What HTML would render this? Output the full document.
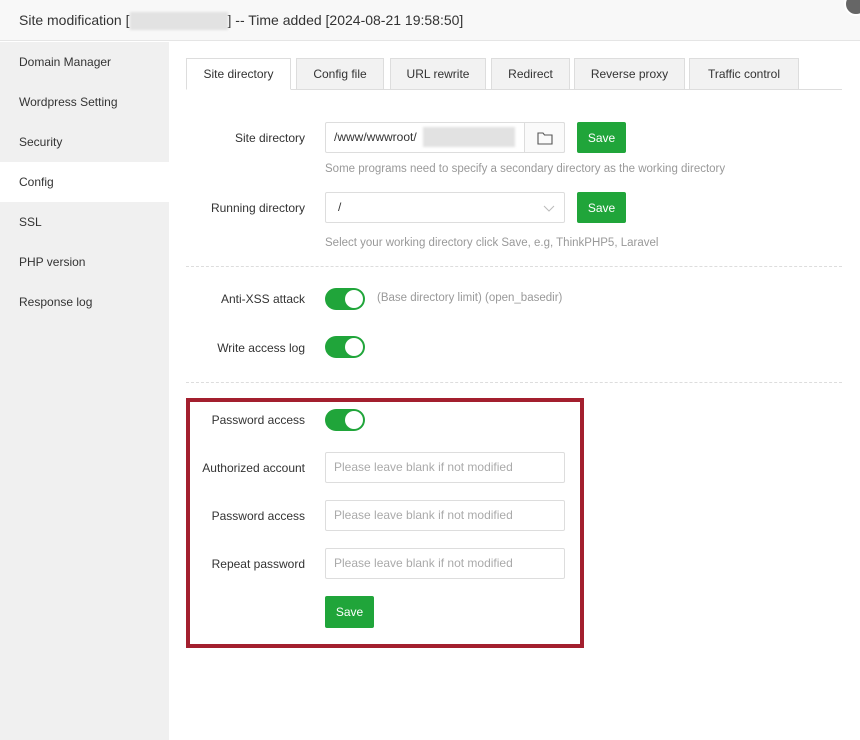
<!DOCTYPE html><html><head><style>
*{box-sizing:border-box;margin:0;padding:0}
body{width:860px;height:740px;overflow:hidden;font-family:"Liberation Sans",sans-serif;font-size:12px;color:#333;background:#fff;position:relative}
.hd{position:absolute;left:0;top:0;width:860px;height:41px;background:#f8f8f8;border-bottom:1px solid #e5e5e5;font-size:14px;line-height:40px;padding-left:19px;color:#333}
.blur{display:inline-block;width:98px;height:18px;background:#e2e2e2;vertical-align:middle;filter:blur(1px)}
.close{position:absolute;left:844px;top:-8px;width:24px;height:24px;border-radius:50%;background:#666;border:2px solid #fff}
.sb{position:absolute;left:0;top:42px;width:169px;height:698px;background:#f0f0f0}
.sb div{height:40px;line-height:40px;padding-left:19px;font-size:12px;color:#333}
.sb .on{background:#fff}
.tabs{position:absolute;left:186px;top:89px;width:656px;border-top:1px solid #ddd}
.tab{position:absolute;top:58px;height:32px;line-height:31px;text-align:center;background:#f2f2f2;border:1px solid #ddd;font-size:12px;color:#333}
.tab.on{background:#fff;border-bottom-color:#fff;height:32px}
.lbl{position:absolute;width:120px;text-align:right;left:185px;font-size:12px;color:#333}
.inp{position:absolute;border:1px solid #ddd;border-radius:2px;height:31px;line-height:29px;padding-left:8px;background:#fff;font-size:12px}
.ph{color:#aaa}
.btn{position:absolute;background:#20a53a;color:#fff;border-radius:2px;text-align:center;font-size:12px;height:31px;line-height:33px;width:49px}
.hint{position:absolute;left:325px;font-size:11.5px;color:#999}
.sw{position:absolute;left:325px;width:40px;height:22px;border-radius:11px;background:#20a53a}
.sw:after{content:"";position:absolute;right:2px;top:2px;width:18px;height:18px;border-radius:50%;background:#fff}
.dash{position:absolute;left:186px;width:656px;border-top:1px dashed #ddd}
.red{position:absolute;left:186px;top:398px;width:398px;height:250px;border:4px solid #a31f2e}
</style></head><body>
<div class="hd">Site modification [<span class="blur"></span>] -- Time added [2024-08-21 19:58:50]</div>
<div class="close"></div>
<div class="sb"><div>Domain Manager</div><div>Wordpress Setting</div><div>Security</div><div class="on">Config</div><div>SSL</div><div>PHP version</div><div>Response log</div></div>
<div class="tabs"></div>
<div class="tab on" style="left:186px;width:105px">Site directory</div>
<div class="tab" style="left:296px;width:88px">Config file</div>
<div class="tab" style="left:390px;width:96px">URL rewrite</div>
<div class="tab" style="left:491px;width:79px">Redirect</div>
<div class="tab" style="left:574px;width:111px">Reverse proxy</div>
<div class="tab" style="left:689px;width:110px">Traffic control</div>

<div class="lbl" style="top:131px">Site directory</div>
<div class="inp" style="left:325px;top:122px;width:240px">/www/wwwroot/<span class="blur" style="width:92px;height:20px;position:absolute;left:97px;top:4px"></span>
<div style="position:absolute;left:198px;top:-1px;width:41px;height:31px;border:1px solid #ddd;background:#fafafa;border-radius:0 2px 2px 0"><svg width="16" height="14" viewBox="0 0 16 14" style="position:absolute;left:12px;top:8px"><path d="M1 2h5l1.5 2H15v9H1z" fill="none" stroke="#555" stroke-width="1.1"/></svg></div></div>
<div class="btn" style="left:577px;top:122px">Save</div>
<div class="hint" style="top:163px">Some programs need to specify a secondary directory as the working directory</div>
<div class="lbl" style="top:201px">Running directory</div>
<div class="inp" style="left:325px;top:192px;width:240px;padding-left:12px">/<svg width="12" height="7" viewBox="0 0 12 7" style="position:absolute;right:9px;top:12px"><path d="M1 1l5 5 5-5" fill="none" stroke="#bbb"/></svg></div>
<div class="btn" style="left:577px;top:192px">Save</div>
<div class="hint" style="top:237px">Select your working directory click Save, e.g, ThinkPHP5, Laravel</div>
<div class="dash" style="top:266px"></div>
<div class="lbl" style="top:292px">Anti-XSS attack</div>
<div class="sw" style="top:288px"></div>
<div class="hint" style="left:377px;top:292px">(Base directory limit) (open_basedir)</div>
<div class="lbl" style="top:341px">Write access log</div>
<div class="sw" style="top:336px"></div>
<div class="dash" style="top:382px"></div>

<div class="red"></div>
<div class="lbl" style="top:413px">Password access</div>
<div class="sw" style="top:409px"></div>
<div class="lbl" style="top:461px">Authorized account</div>
<div class="inp ph" style="left:325px;top:452px;width:240px">Please leave blank if not modified</div>
<div class="lbl" style="top:509px">Password access</div>
<div class="inp ph" style="left:325px;top:500px;width:240px">Please leave blank if not modified</div>
<div class="lbl" style="top:557px">Repeat password</div>
<div class="inp ph" style="left:325px;top:548px;width:240px">Please leave blank if not modified</div>
<div class="btn" style="left:325px;top:596px;height:32px;line-height:33px">Save</div>
</body></html>
